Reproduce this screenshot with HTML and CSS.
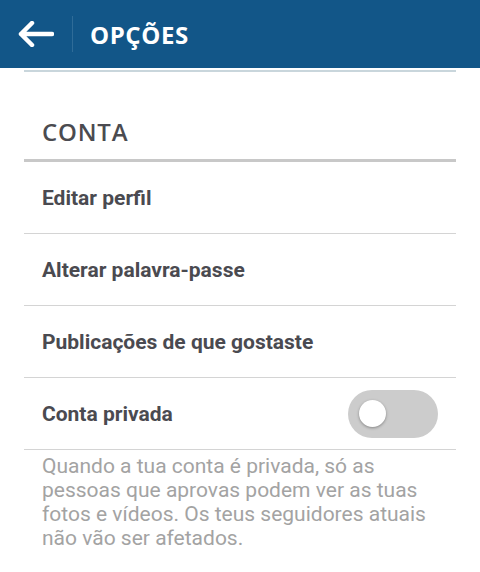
FILE: index.html
```html
<!DOCTYPE html>
<html lang="pt">
<head>
<meta charset="utf-8">
<link rel="stylesheet" href="styles.css">
</head>
<body>
<header class="topbar">
  <div class="back">
    <svg width="36" height="26" viewBox="0 0 36 26"><path d="M3 13H34M14 2L3 13L14 24" fill="none" stroke="#fff" stroke-width="4.5" stroke-linecap="round" stroke-linejoin="round"/></svg>
  </div>
  <div class="divider"></div>
  <h1 class="title">OPÇÕES</h1>
</header>
<main class="content">
  <div class="topline"></div>
  <h2 class="section">CONTA</h2>
  <ul class="list">
    <li class="row">Editar perfil</li>
    <li class="row">Alterar palavra-passe</li>
    <li class="row">Publicações de que gostaste</li>
    <li class="row toggle-row">
      <span>Conta privada</span>
      <span class="switch"><span class="knob"></span></span>
    </li>
  </ul>
  <p class="note">Quando a tua conta é privada, só as pessoas que aprovas podem ver as tuas fotos e vídeos. Os teus seguidores atuais não vão ser afetados.</p>
</main>
</body>
</html>
```
FILE: styles.css
```css
* { box-sizing: border-box; }
html, body { margin: 0; padding: 0; background: #fff; }
body { width: 480px; height: 572px; overflow: hidden; font-family: Roboto, "Liberation Sans", sans-serif; }
.topbar {
  height: 68px;
  background: #125688;
  display: flex;
  align-items: center;
}
.back { width: 72px; display: flex; justify-content: center; }
.back svg { display: block; margin-left: 0; }
.divider { width: 1px; height: 36px; background: #2f6c98; }
.title {
  margin: 0 0 0 17px;
  color: #fff;
  font-family: "Open Sans", sans-serif;
  font-weight: 700;
  font-size: 24px;
  letter-spacing: 0.6px;
}
.content { padding: 0 24px; }
.topline { height: 2px; background: #c9d6dc; margin-top: 2px; }
.section {
  margin: 0;
  padding: 48px 18px 15px;
  font-family: "Open Sans", sans-serif;
  font-weight: 600;
  font-size: 24px;
  letter-spacing: 0.8px;
  color: #4b4b50;
  border-bottom: 3px solid #c8c8c8;
  line-height: 24px;
}
.list { list-style: none; margin: 0; padding: 0; }
.row {
  height: 72px;
  border-bottom: 1px solid #d4d4d4;
  display: flex;
  align-items: center;
  padding: 1px 18px 0;
  font-weight: 700;
  font-size: 21px;
  color: #4a4a50;
}
.toggle-row { justify-content: space-between; padding-right: 18px; padding-top: 0; }
.toggle-row > span:first-child { padding-top: 1px; }
.switch {
  width: 90px; height: 48px; border-radius: 24px;
  background: #cccccc;
  position: relative;
}
.knob {
  position: absolute; left: 11px; top: 10px;
  width: 27px; height: 27px; border-radius: 50%;
  background: #fff;
  box-shadow: 0 1px 3px rgba(0,0,0,0.35);
}
.note {
  margin: 0;
  padding: 4px 18px 0;
  font-size: 21px;
  line-height: 24px;
  color: #a3a3a3;
}
```
